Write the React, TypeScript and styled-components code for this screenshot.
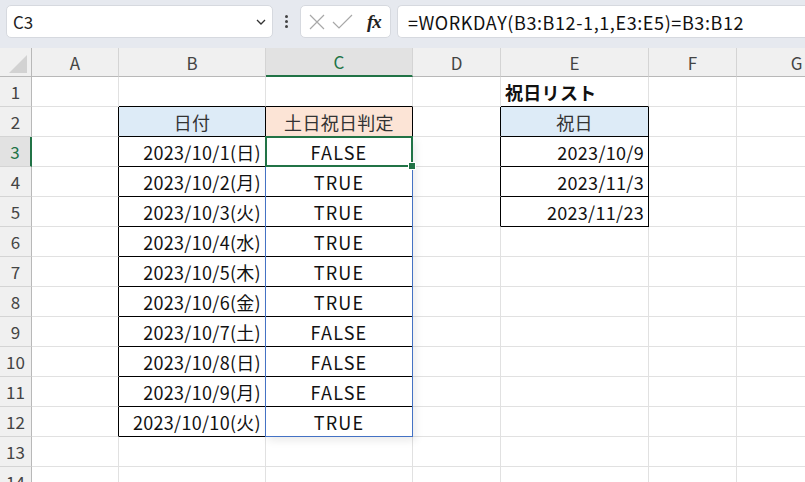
import React from 'react';
import styled, { createGlobalStyle } from 'styled-components';

const GlobalStyle = createGlobalStyle`
  html, body { margin: 0; padding: 0; background: #ffffff; }
  body { font-family: "Noto Sans CJK JP", "Noto Sans", sans-serif; overflow: hidden; }
`;

const COLS = [32, 87, 147, 147, 88, 148, 88, 120];
const LETTERS = ['', 'A', 'B', 'C', 'D', 'E', 'F', 'G'];
const HEADER_H = 29;
const ROW_H = 30;
const ROWS = 14;

const GRID = '#e1e1e1';
const BLACK = '#000000';
const GREEN = '#217346';
const BLUE = '#4472c4';

type Align = 'left' | 'center' | 'right';
type CellData = {
  text: string;
  align: Align;
  bold?: boolean;
  fill?: string;
  dim?: boolean;
  wide?: boolean;
};

const days = ['日', '月', '火', '水', '木', '金', '土', '日', '月', '火'];
const results = ['FALSE', 'TRUE', 'TRUE', 'TRUE', 'TRUE', 'TRUE', 'FALSE', 'FALSE', 'FALSE', 'TRUE'];

const cells: Record<string, CellData> = {
  '2,2': { text: '日付', align: 'center', fill: '#ddebf7', dim: true },
  '3,2': { text: '土日祝日判定', align: 'center', fill: '#fce4d6', dim: true },
  '5,1': { text: '祝日リスト', align: 'left', bold: true },
  '5,2': { text: '祝日', align: 'center', fill: '#ddebf7', dim: true },
  '5,3': { text: '2023/10/9', align: 'right' },
  '5,4': { text: '2023/11/3', align: 'right' },
  '5,5': { text: '2023/11/23', align: 'right' },
};
days.forEach((d, i) => {
  cells[`2,${i + 3}`] = { text: `2023/10/${i + 1}(${d})`, align: 'right' };
  cells[`3,${i + 3}`] = { text: results[i], align: 'center', wide: true };
});

const inTable = (c: number, r: number) =>
  (c >= 2 && c <= 3 && r >= 2 && r <= 12) || (c === 5 && r >= 2 && r <= 5);

const colLeft = (c: number) => COLS.slice(0, c).reduce((a, b) => a + b, 0);
const rowTop = (r: number) => HEADER_H + (r - 1) * ROW_H;

export default function App() {
  return (
    <>
      <GlobalStyle />
      <Page>
        <Toolbar>
          <NameBox>
            <span>C3</span>
            <svg width="14" height="14" viewBox="0 0 14 14">
              <path d="M3 5 L7 9 L11 5" fill="none" stroke="#333" strokeWidth="1.3" />
            </svg>
          </NameBox>
          <Dots>
            <i />
            <i />
            <i />
          </Dots>
          <FxBox>
            <svg width="20" height="20" viewBox="0 0 20 20">
              <path d="M3 3 L17 17 M17 3 L3 17" stroke="#a8a8a8" strokeWidth="1.2" fill="none" />
            </svg>
            <svg width="24" height="20" viewBox="0 0 24 20">
              <path d="M2 10 L8 16 L21 3" stroke="#a8a8a8" strokeWidth="1.2" fill="none" />
            </svg>
            <FxLabel>fx</FxLabel>
          </FxBox>
          <FormulaBox>=WORKDAY(B3:B12-1,1,E3:E5)=B3:B12</FormulaBox>
        </Toolbar>
        <Sheet>
          <Corner>
            <svg width="20" height="20" viewBox="0 0 20 20">
              <path d="M19 1 L19 19 L1 19 Z" fill="#d2d2d2" />
            </svg>
          </Corner>
          {LETTERS.slice(1).map((l, i) => (
            <ColHeader key={l} $width={COLS[i + 1]} $active={l === 'C'}>
              {l}
            </ColHeader>
          ))}
          {Array.from({ length: ROWS }, (_, ri) => {
            const r = ri + 1;
            return (
              <React.Fragment key={r}>
                <RowHeader $active={r === 3}>{r}</RowHeader>
                {COLS.slice(1).map((_w, ci) => {
                  const c = ci + 1;
                  const data = cells[`${c},${r}`];
                  const right = inTable(c, r) || inTable(c + 1, r) ? BLACK : GRID;
                  const bottom = inTable(c, r) || inTable(c, r + 1) ? BLACK : GRID;
                  return (
                    <Cell
                      key={c}
                      $right={right}
                      $bottom={bottom}
                      $align={data?.align ?? 'left'}
                      $fill={data?.fill}
                      $bold={data?.bold}
                      $dim={data?.dim}
                      $wide={data?.wide}
                    >
                      {data?.text}
                    </Cell>
                  );
                })}
              </React.Fragment>
            );
          })}
          <SpillFrame
            style={{
              left: colLeft(3) - 1,
              top: rowTop(3) - 1,
              width: COLS[3] + 1,
              height: ROW_H * 10 + 1,
            }}
          />
          <ActiveFrame
            style={{
              left: colLeft(3) - 1,
              top: rowTop(3) - 1,
              width: COLS[3] + 1,
              height: ROW_H + 1,
            }}
          >
            <Handle />
          </ActiveFrame>
        </Sheet>
      </Page>
    </>
  );
}

const Page = styled.div`
  width: 805px;
  height: 482px;
  overflow: hidden;
  background: #ffffff;
`;

const Toolbar = styled.div`
  height: 48px;
  box-sizing: border-box;
  background: #e6e9ef;
  display: flex;
  align-items: flex-start;
  padding: 5px 0 0 6px;
`;

const Box = styled.div`
  height: 33px;
  box-sizing: border-box;
  background: #ffffff;
  border: 1px solid #d6d9df;
  border-radius: 5px;
  display: flex;
  align-items: center;
`;

const NameBox = styled(Box)`
  width: 267px;
  padding: 0 4px 0 6px;
  justify-content: space-between;
  font-size: 17px;
  color: #222;
  font-family: "Noto Sans CJK JP", "Noto Sans", sans-serif;
`;

const Dots = styled.div`
  width: 27px;
  height: 33px;
  display: flex;
  flex-direction: column;
  align-items: center;
  justify-content: center;
  gap: 2px;
  i {
    width: 3px;
    height: 3px;
    border-radius: 50%;
    background: #444;
  }
`;

const FxBox = styled(Box)`
  width: 91px;
  padding: 0 6px;
  gap: 4px;
`;

const FxLabel = styled.span`
  font-family: "Liberation Serif", serif;
  font-style: italic;
  font-weight: bold;
  font-size: 19px;
  color: #222;
  margin-left: 8px;
  letter-spacing: -1px;
`;

const FormulaBox = styled(Box)`
  flex: 1;
  margin-left: 6px;
  padding-left: 10px;
  border-right: none;
  border-radius: 5px 0 0 5px;
  font-size: 18px;
  letter-spacing: 0.6px;
  color: #111;
  font-family: "Noto Sans CJK JP", "Noto Sans", sans-serif;
`;

const Sheet = styled.div`
  position: relative;
  display: grid;
  grid-template-columns: ${COLS.map((w) => `${w}px`).join(' ')};
  grid-template-rows: ${HEADER_H}px repeat(${ROWS}, ${ROW_H}px);
`;

const Corner = styled.div`
  background: #f0f0f0;
  border-right: 1px solid #b8b8b8;
  border-bottom: 1px solid #b8b8b8;
  box-sizing: border-box;
  display: flex;
  align-items: flex-end;
  justify-content: flex-end;
  padding: 0 3px 2px 0;
`;

const ColHeader = styled.div<{ $width: number; $active?: boolean }>`
  box-sizing: border-box;
  background: ${({ $active }) => ($active ? '#e2e2e2' : '#f0f0f0')};
  border-right: 1px solid #d4d4d4;
  border-bottom: ${({ $active }) => ($active ? `2px solid ${GREEN}` : '1px solid #b8b8b8')};
  display: flex;
  align-items: center;
  justify-content: center;
  font-size: 17px;
  color: ${({ $active }) => ($active ? GREEN : '#444')};
  font-family: "Noto Sans CJK JP", sans-serif;
`;

const RowHeader = styled.div<{ $active?: boolean }>`
  box-sizing: border-box;
  background: ${({ $active }) => ($active ? '#e2e2e2' : '#f0f0f0')};
  border-right: ${({ $active }) => ($active ? `2px solid ${GREEN}` : '1px solid #b8b8b8')};
  border-bottom: 1px solid #d4d4d4;
  display: flex;
  align-items: center;
  justify-content: center;
  font-size: 17px;
  color: ${({ $active }) => ($active ? GREEN : '#444')};
  font-family: "Noto Sans CJK JP", sans-serif;
`;

const Cell = styled.div<{
  $right: string;
  $bottom: string;
  $align: Align;
  $fill?: string;
  $bold?: boolean;
  $dim?: boolean;
  $wide?: boolean;
}>`
  box-sizing: border-box;
  border-right: 1px solid ${({ $right }) => $right};
  border-bottom: 1px solid ${({ $bottom }) => $bottom};
  background: ${({ $fill }) => $fill ?? '#ffffff'};
  display: flex;
  align-items: center;
  justify-content: ${({ $align }) =>
    $align === 'left' ? 'flex-start' : $align === 'right' ? 'flex-end' : 'center'};
  padding: 0 4px;
  font-size: 18px;
  letter-spacing: ${({ $wide }) => ($wide ? '1.2px' : '0.3px')};
  font-weight: ${({ $bold }) => ($bold ? 700 : 400)};
  color: ${({ $dim }) => ($dim ? '#333' : '#111')};
  white-space: nowrap;
  overflow: visible;
`;

const SpillFrame = styled.div`
  position: absolute;
  box-sizing: border-box;
  border: 1px solid ${BLUE};
  box-shadow: 3px 4px 8px rgba(0, 0, 0, 0.08);
  pointer-events: none;
`;

const ActiveFrame = styled.div`
  position: absolute;
  box-sizing: border-box;
  border: 2px solid ${GREEN};
  pointer-events: none;
`;

const Handle = styled.div`
  position: absolute;
  right: -5px;
  bottom: -5px;
  width: 6px;
  height: 6px;
  background: ${GREEN};
  border: 1px solid #ffffff;
`;
